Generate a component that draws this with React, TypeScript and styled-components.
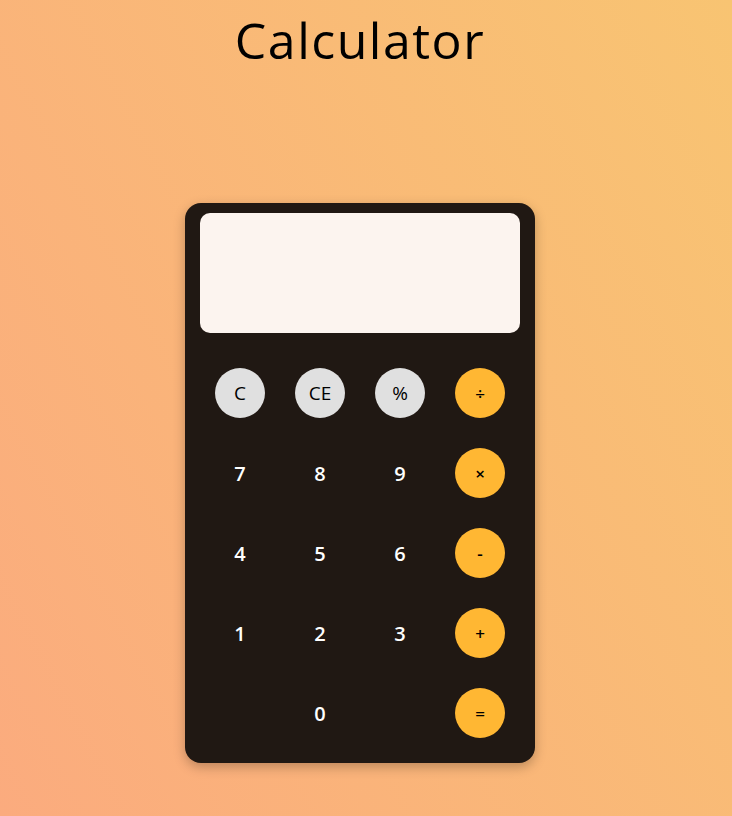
import React from "react";
import styled, { createGlobalStyle } from "styled-components";

const GlobalStyle = createGlobalStyle`
  html, body { margin: 0; padding: 0; }
  body {
    min-height: 816px;
    background-color: #fbab7e;
    background-image: linear-gradient(62deg, #fbab7e 0%, #f8c472 100%);
    font-family: "Open Sans", "Noto Sans", sans-serif;
  }
`;

const Page = styled.div`
  display: flex;
  flex-direction: column;
  align-items: center;
  padding-right: 12px;
  min-height: 816px;
  box-sizing: border-box;
`;

const Title = styled.h1`
  margin: 15px 0 0;
  font-size: 50px;
  line-height: 50px;
  font-weight: 400;
  color: #000;
  letter-spacing: 1.5px;
`;

const Card = styled.div`
  margin-top: 138px;
  width: 350px;
  box-sizing: border-box;
  padding: 10px 15px;
  background: #201813;
  border-radius: 16px;
  box-shadow: 0 4px 12px rgba(0, 0, 0, 0.25);
  display: flex;
  flex-direction: column;
  gap: 20px;
`;

const Display = styled.div`
  height: 120px;
  background: #fcf4ef;
  border-radius: 10px;
`;

const Keys = styled.div`
  display: grid;
  grid-template-columns: repeat(4, 80px);
  grid-auto-rows: 80px;
`;

type Kind = "digit" | "func" | "op";

const Key = styled.button<{ $kind: Kind; $col?: number }>`
  width: 50px;
  height: 50px;
  border: none;
  border-radius: 50%;
  padding: 0;
  place-self: center;
  font-family: "Open Sans", "Noto Sans", sans-serif;
  font-size: 19px;
  cursor: pointer;
  ${(p) => (p.$col ? `grid-column: ${p.$col};` : "")}
  ${(p) =>
    p.$kind === "digit"
      ? `background: transparent; color: #fff; font-weight: 600; font-size: 20px;`
      : p.$kind === "func"
      ? `background: #e0e0e0; color: #000; font-weight: 400;`
      : `background: #ffb733; color: #000; font-weight: 600; font-size: 17px;`}
`;

const rows: { label: string; kind: Kind; col?: number }[] = [
  { label: "C", kind: "func" },
  { label: "CE", kind: "func" },
  { label: "%", kind: "func" },
  { label: "÷", kind: "op" },
  { label: "7", kind: "digit" },
  { label: "8", kind: "digit" },
  { label: "9", kind: "digit" },
  { label: "×", kind: "op" },
  { label: "4", kind: "digit" },
  { label: "5", kind: "digit" },
  { label: "6", kind: "digit" },
  { label: "-", kind: "op" },
  { label: "1", kind: "digit" },
  { label: "2", kind: "digit" },
  { label: "3", kind: "digit" },
  { label: "+", kind: "op" },
  { label: "0", kind: "digit", col: 2 },
  { label: "=", kind: "op", col: 4 },
];

export default function App() {
  return (
    <>
      <GlobalStyle />
      <Page>
        <Title>Calculator</Title>
        <Card>
          <Display />
          <Keys>
            {rows.map((k) => (
              <Key key={k.label} $kind={k.kind} $col={k.col}>
                {k.label}
              </Key>
            ))}
          </Keys>
        </Card>
      </Page>
    </>
  );
}
